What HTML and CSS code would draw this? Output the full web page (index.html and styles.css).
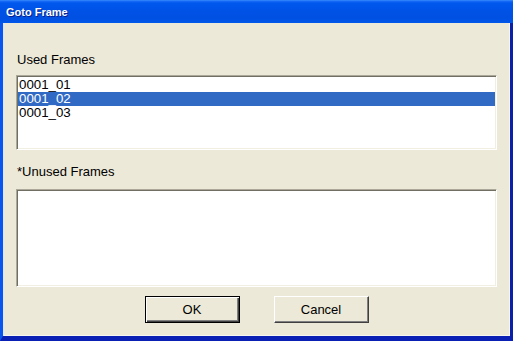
FILE: index.html
```html
<!DOCTYPE html>
<html lang="en">
<head>
    <meta charset="UTF-8">
    <meta name="viewport" content="width=device-width, initial-scale=1.0">
    <title>Goto Frame</title>
    <link rel="stylesheet" href="styles.css">
</head>
<body>
    <div class="window">
        <div class="titlebar">Goto Frame</div>
        <div class="client">
            <label class="caption">Used Frames</label>
            <ul class="listbox used">
                <li>0001_01</li>
                <li class="selected">0001_02</li>
                <li>0001_03</li>
            </ul>

            <label class="caption second">*Unused Frames</label>
            <ul class="listbox unused"></ul>

            <div class="buttons">
                <button type="button" class="btn default">OK</button>
                <button type="button" class="btn">Cancel</button>
            </div>
        </div>
    </div>
</body>
</html>
```

FILE: styles.css
```css
body {
    margin: 0;
    background-color: #0054e3;
    font-family: "Liberation Sans", Arial, sans-serif;
}
.window {
    width: 513px;
    height: 341px;
    display: flex;
    flex-direction: column;
}
.titlebar {
    height: 23px;
    box-sizing: border-box;
    padding: 5px 0 0 6px;
    color: #fff;
    font-size: 11px;
    font-weight: bold;
    line-height: 14px;
    text-shadow: 1px 1px #0a1e8c;
    background: linear-gradient(to bottom, #3d95ff 0, #1a6cf6 1px, #0058ee 3px, #0052e6 45%, #0050e2 80%, #0057ea 100%);
}
.client {
    flex: 1;
    display: flex;
    flex-direction: column;
    padding: 29px 13px 0 13px;
    background-color: #ece9d8;
    border-left: 3px solid #0a56ea;
    border-right: 3px solid #0b20a8;
    border-bottom: 5px solid #0a1fb4;
    box-shadow: inset 1px 0 #dfe6f7, inset -1px -1px #f7f6f0;
}
.caption {
    display: block;
    font-size: 13px;
    line-height: 15px;
    color: #000;
    padding-left: 1px;
}
.caption.second {
    margin-top: 14px;
}
.listbox {
    list-style: none;
    margin: 8px 0 0 0;
    padding: 1px 0 0 0;
    box-sizing: border-box;
    background-color: #fff;
    border: 1px solid;
    border-color: #aca899 #fff #fff #aca899;
    box-shadow: inset 1px 1px #716f64, inset -1px -1px #f1efe2;
}
.listbox.used {
    height: 75px;
    padding: 2px 1px 0 1px;
}
.listbox.unused {
    height: 98px;
    margin-top: 10px;
}
.listbox li {
    height: 14px;
    line-height: 14px;
    font-size: 13.3px;
    padding-left: 1px;
    color: #000;
}
.listbox li.selected {
    background-color: #316ac5;
    color: #fff;
}
.buttons {
    display: flex;
    justify-content: center;
    gap: 34px;
    margin-top: 9px;
}
.btn {
    width: 95px;
    height: 27px;
    padding: 0;
    font-family: "Liberation Sans", Arial, sans-serif;
    font-size: 13px;
    color: #000;
    background-color: #ece9d8;
    border: 1px solid;
    border-color: #fff #404040 #404040 #fff;
    box-shadow: inset -1px -1px #808080;
}
.btn.default {
    border-color: #000;
    box-shadow: inset 1px 1px #fff, inset -1px -1px #404040, inset -2px -2px #808080;
}
```
